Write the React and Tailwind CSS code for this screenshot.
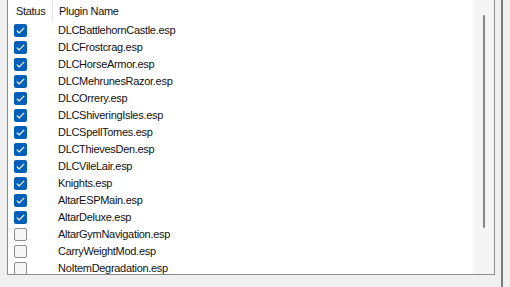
const plugins = [
  ['DLCBattlehornCastle.esp', true],
  ['DLCFrostcrag.esp', true],
  ['DLCHorseArmor.esp', true],
  ['DLCMehrunesRazor.esp', true],
  ['DLCOrrery.esp', true],
  ['DLCShiveringIsles.esp', true],
  ['DLCSpellTomes.esp', true],
  ['DLCThievesDen.esp', true],
  ['DLCVileLair.esp', true],
  ['Knights.esp', true],
  ['AltarESPMain.esp', true],
  ['AltarDeluxe.esp', true],
  ['AltarGymNavigation.esp', false],
  ['CarryWeightMod.esp', false],
  ['NoItemDegradation.esp', false],
];

function CheckBox({ checked }) {
  if (checked) {
    return (
      <div className="w-[13px] h-[13px] rounded-[2px] bg-[#005fb8] flex items-center justify-center">
        <svg width="9" height="7" viewBox="0 0 9 7" fill="none">
          <path d="M0.8 3.6 L3.2 5.9 L8.2 0.9" stroke="white" strokeWidth="1.2" />
        </svg>
      </div>
    );
  }
  return <div className="w-[13px] h-[13px] rounded-[2px] border border-[#8d8d8d] bg-[#f7f7f7]" />;
}

export default function App() {
  return (
    <div className="w-[510px] h-[287px] bg-[#f0f0f0] overflow-hidden flex text-[11px] tracking-[-0.3px] text-[#111]" style={{ fontFamily: '"Liberation Sans", Arial, sans-serif' }}>
      {/* plugin list */}
      <div className="ml-[7px] w-[488px] h-[275px] flex border-l border-r border-b border-[#8c8c8c] bg-white">
        <div className="flex-1 flex flex-col">
          {/* header */}
          <div className="h-[22px] flex items-center">
            <div className="w-[45px] h-[22px] flex items-center pl-[8px] border-r border-[#e5e5e5]">Status</div>
            <div className="pl-[6px]">Plugin Name</div>
          </div>
          <div className="h-[2px]" />
          {plugins.map(([name, on]) => (
            <div key={name} className="h-[17px] shrink-0 flex items-center">
              <div className="w-[50px] pl-[6px] flex items-center">
                <CheckBox checked={on} />
              </div>
              <div>{name}</div>
            </div>
          ))}
        </div>
        {/* scrollbar */}
        <div className="w-[21px] h-full bg-[#f5f5f5] flex justify-center pt-[15px]">
          <div className="w-[2px] h-[213px] rounded-full bg-[#858585] ml-[1px]" />
        </div>
      </div>
      {/* splitter edge */}
      <div className="ml-[6px] w-[2px] h-full bg-[#7a7a7a]" />
    </div>
  );
}
